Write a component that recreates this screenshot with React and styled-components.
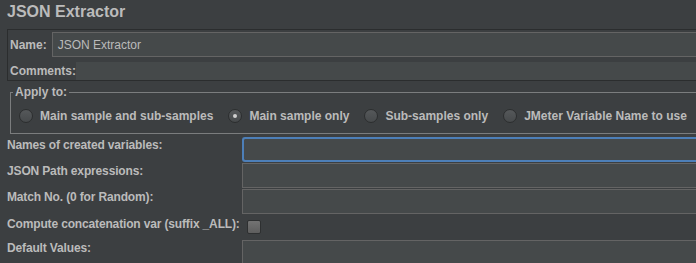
import React from "react";
import styled, { createGlobalStyle } from "styled-components";

const GlobalStyle = createGlobalStyle`
  html, body {
    margin: 0;
    padding: 0;
    background: #3c3f41;
    overflow: hidden;
  }
  * { box-sizing: border-box; }
`;

const Page = styled.div`
  width: 720px;
  height: 263px;
  overflow: hidden;
  background: #3c3f41;
  color: #bbbbbb;
  font-family: "Liberation Sans", Arial, sans-serif;
  font-size: 12px;
`;

const Title = styled.div`
  height: 29px;
  padding: 3px 0 0 7px;
  font-size: 16px;
  font-weight: bold;
  line-height: 18px;
`;

const NamePanel = styled.div`
  margin-left: 7px;
  border: 1px solid #2b2d2e;
  border-right: none;
  padding: 2px 0 0 1px;
`;

const PanelRow = styled.div`
  display: flex;
  align-items: center;
  height: ${(p) => p.$h}px;
  margin-top: ${(p) => p.$mt || 0}px;
`;

const Label = styled.span`
  font-weight: bold;
  white-space: nowrap;
  padding-left: ${(p) => p.$pl || 0}px;
  padding-right: ${(p) => p.$pr || 0}px;
  line-height: 16px;
`;

const TextField = styled.div`
  flex: 1;
  height: 100%;
  background: #45494a;
  border: 1px solid #646464;
  padding-left: 5px;
  display: flex;
  align-items: center;
  font-size: 12px;
`;

const TextArea = styled.div`
  flex: 1;
  height: 100%;
  background: #45494a;
`;

const Fieldset = styled.fieldset`
  margin: 4px 0 0 10px;
  padding: 0;
  border: 1px solid #7b7d7e;
  border-right: none;
  min-width: 0;
`;

const Legend = styled.legend`
  margin-left: 2px;
  padding: 0 2px;
  font-weight: bold;
  font-size: 12px;
  line-height: 14px;
`;

const RadioRow = styled.div`
  display: flex;
  align-items: center;
  gap: 15px;
  padding: 9px 0 9px 8px;
`;

const RadioItem = styled.label`
  display: flex;
  align-items: center;
  gap: 7px;
  font-weight: bold;
  white-space: nowrap;
  line-height: 16px;
`;

const RadioIcon = ({ checked }) => (
  <svg width="14" height="14" viewBox="0 0 14 14">
    <defs>
      <linearGradient id="rg" x1="0" y1="0" x2="0" y2="1">
        <stop offset="0" stopColor="#56595b" />
        <stop offset="1" stopColor="#46494b" />
      </linearGradient>
    </defs>
    <circle cx="7" cy="7" r="6.5" fill="url(#rg)" stroke="#2c2e2f" strokeWidth="1" />
    {checked && <circle cx="7" cy="7" r="2" fill="#d0d0d0" />}
  </svg>
);

const FormGrid = styled.div`
  display: grid;
  grid-template-columns: 235px 1fr;
  row-gap: 1px;
  margin-top: 3px;
  padding-left: 7px;
`;

const FormLabel = styled.div`
  font-weight: bold;
  white-space: nowrap;
  line-height: 16px;
  letter-spacing: -0.15px;
  align-self: start;
  padding-top: ${(p) => p.$pt || 0}px;
`;

const FormField = styled.div`
  height: 25px;
  background: #45494a;
  border: ${(p) => (p.$focused ? "2px solid #4d7fb8" : "1px solid #646464")};
  border-radius: ${(p) => (p.$focused ? "3px" : "0")};
  border-right: none;
`;

const CheckCell = styled.div`
  height: 24px;
  padding: 5px 0 0 5px;
`;

const CheckBox = styled.div`
  width: 14px;
  height: 14px;
  border: 1px solid #2e3031;
  border-radius: 2px;
  background: linear-gradient(#737373, #5e5e5e);
`;

export default function App() {
  const radios = [
    { label: "Main sample and sub-samples", checked: false },
    { label: "Main sample only", checked: true },
    { label: "Sub-samples only", checked: false },
    { label: "JMeter Variable Name to use", checked: false },
  ];
  const rows = [
    { label: "Names of created variables:", type: "field", focused: true },
    { label: "JSON Path expressions:", type: "field" },
    { label: "Match No. (0 for Random):", type: "field" },
    { label: "Compute concatenation var (suffix _ALL):", type: "check" },
    { label: "Default Values:", type: "field" },
  ];
  return (
    <Page>
      <GlobalStyle />
      <Title>JSON Extractor</Title>
      <NamePanel>
        <PanelRow $h={25}>
          <Label $pl={1} $pr={5}>Name:</Label>
          <TextField>JSON Extractor</TextField>
        </PanelRow>
        <PanelRow $h={18} $mt={5}>
          <Label $pl={1}>Comments:</Label>
          <TextArea />
        </PanelRow>
      </NamePanel>
      <Fieldset>
        <Legend>Apply to:</Legend>
        <RadioRow>
          {radios.map((r) => (
            <RadioItem key={r.label}>
              <RadioIcon checked={r.checked} />
              {r.label}
            </RadioItem>
          ))}
        </RadioRow>
      </Fieldset>
      <FormGrid>
        {rows.map((r) => (
          <React.Fragment key={r.label}>
            <FormLabel $pt={r.type === "check" ? 1 : 0}>{r.label}</FormLabel>
            {r.type === "field" ? (
              <FormField $focused={r.focused} />
            ) : (
              <CheckCell>
                <CheckBox />
              </CheckCell>
            )}
          </React.Fragment>
        ))}
      </FormGrid>
    </Page>
  );
}
